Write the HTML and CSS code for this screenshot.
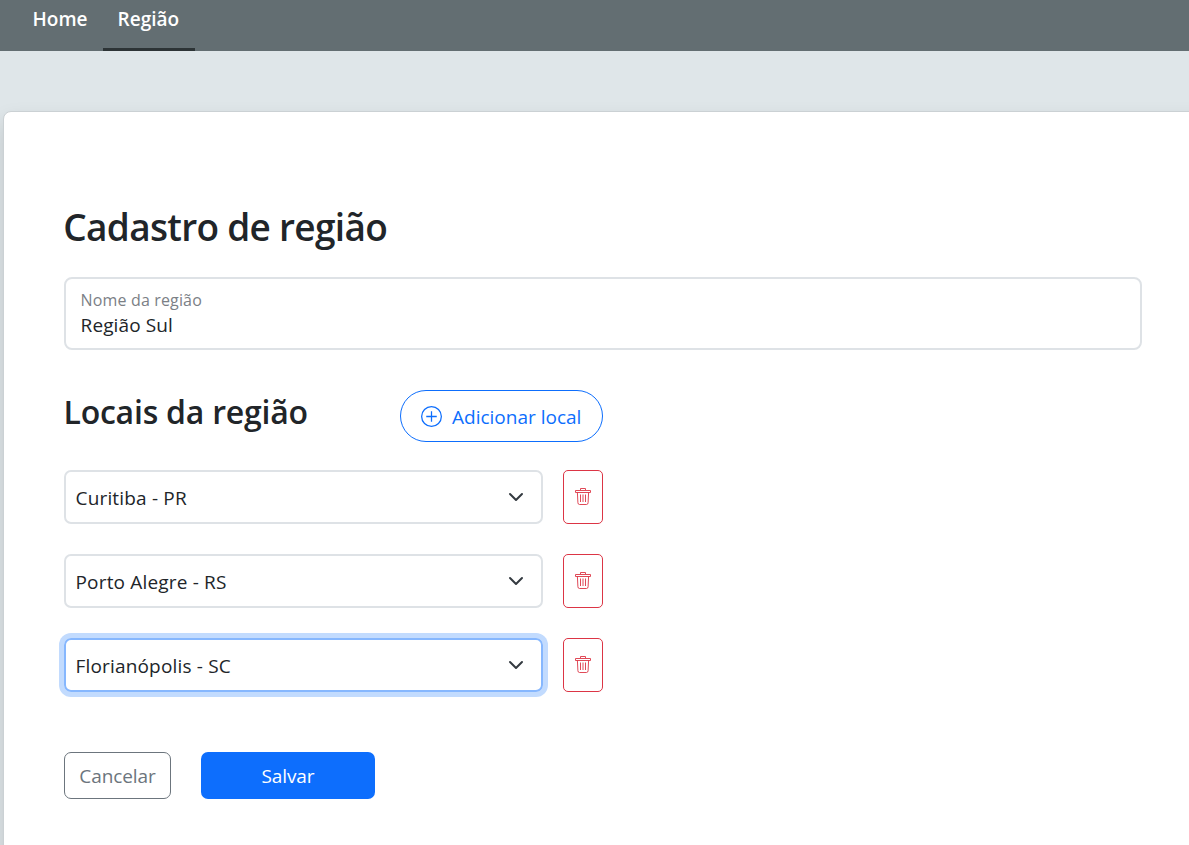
FILE: index.html
```html
<!DOCTYPE html>
<html lang="pt-BR">
<head>
<meta charset="utf-8">
<title>Cadastro de região</title>
<link rel="stylesheet" href="styles.css">
</head>
<body>
<svg class="sprite" aria-hidden="true">
  <symbol id="trash" viewBox="0 0 16 18">
    <path d="M.5 3.5h15v2H.5zM5.5 3V1.5h5V3M2.4 5.5l.5 10.2q.1 1.8 1.6 1.8h7q1.5 0 1.6-1.8l.5-10.2M5.5 7.5v7.5M8 7.5v7.5M10.5 7.5v7.5"/>
  </symbol>
  <symbol id="chevron" viewBox="0 0 16 16">
    <path d="m2 5 6 6 6-6"/>
  </symbol>
</svg>
<nav class="navbar">
  <a class="nav-link">Home</a>
  <a class="nav-link active">Região</a>
</nav>
<main class="card">
  <h1 class="title">Cadastro de região</h1>
  <div class="field">
    <span class="field-label">Nome da região</span>
    <span class="field-value">Região Sul</span>
  </div>
  <div class="places-head">
    <h2 class="subtitle">Locais da região</h2>
    <button class="btn-add" type="button">
      <svg class="plus" viewBox="0 0 20 20"><circle cx="10" cy="10" r="9.4"/><path d="M10 5v10M5 10h10"/></svg>
      <span class="add-text">Adicionar local</span>
    </button>
  </div>
  <div class="places">
    <div class="place">
      <div class="select"><span class="city">Curitiba - PR</span><svg class="chevron"><use href="#chevron"/></svg></div>
      <button class="btn-trash" type="button" aria-label="Remover"><svg class="trash"><use href="#trash"/></svg></button>
    </div>
    <div class="place">
      <div class="select"><span class="city">Porto Alegre - RS</span><svg class="chevron"><use href="#chevron"/></svg></div>
      <button class="btn-trash" type="button" aria-label="Remover"><svg class="trash"><use href="#trash"/></svg></button>
    </div>
    <div class="place">
      <div class="select focused"><span class="city">Florianópolis - SC</span><svg class="chevron"><use href="#chevron"/></svg></div>
      <button class="btn-trash" type="button" aria-label="Remover"><svg class="trash"><use href="#trash"/></svg></button>
    </div>
  </div>
  <div class="actions">
    <button class="btn-cancel" type="button">Cancelar</button>
    <button class="btn-save" type="button">Salvar</button>
  </div>
</main>
</body>
</html>
```
FILE: styles.css
```css
* { box-sizing: border-box; }
body {
  margin: 0;
  height: 845px;
  overflow: hidden;
  background: #dfe6e9;
  color: #212529;
  font: 19px/28px "Open Sans", "Noto Sans", sans-serif;
  white-space: nowrap;
}
button { margin: 0; padding: 0; background: #fff; font: inherit; cursor: pointer; }
svg { display: block; flex: none; fill: none; stroke: currentColor; }
.sprite { position: absolute; width: 0; height: 0; }

.navbar { display: flex; height: 51px; padding-left: 18px; background: #636e72; }
.nav-link {
  width: 85px;
  padding: 5px 0 0 14.6px;
  border-bottom: 3px solid transparent;
  color: #fff;
  font-size: 19px;
  font-weight: 600;
}
.nav-link.active { width: 92px; border-bottom-color: #2d3436; }

.card {
  width: 1230px;
  height: 760px;
  margin: 60px 0 0 3px;
  padding: 91px 0 0 60px;
  border: 1px solid #cbd1d4;
  border-radius: 8px;
  background: #fff;
  box-shadow: 0 10px 20px rgba(0, 0, 0, .15);
}
.title { margin: 0 0 26px -.7px; font-size: 37px; font-weight: 600; line-height: 48px; letter-spacing: -.7px; }
.field {
  display: flex;
  flex-direction: column;
  width: 1078px;
  height: 73px;
  padding: 9px 14.6px;
  border: 2px solid #dee2e6;
  border-radius: 8px;
}
.field-label { color: #7b8086; font-size: 16px; line-height: 24px; letter-spacing: .15px; }
.field-value { line-height: 27px; letter-spacing: .1px; }

.places-head { display: flex; width: 539px; height: 52px; margin-top: 40px; justify-content: space-between; }
.subtitle { margin: 0 0 0 -.5px; font-size: 32px; font-weight: 600; line-height: 44px; letter-spacing: -.23px; }
.btn-add {
  display: flex;
  align-items: center;
  gap: 10px;
  width: 203px;
  padding-left: 20px;
  border: 1px solid #0d6efd;
  border-radius: 26px;
  color: #0d6efd;
}
.add-text { padding-top: 1px; }
.plus { width: 21px; height: 21px; stroke-width: 1.2; }

.places { display: grid; gap: 30px; margin-top: 28px; }
.place { display: flex; gap: 20px; height: 54px; }
.select {
  display: flex;
  align-items: center;
  justify-content: space-between;
  width: 479px;
  padding: 0 17px 0 9.5px;
  border: 2px solid #dee2e6;
  border-radius: 7px;
}
.select.focused { border-color: #86b7fe; box-shadow: 0 0 0 5px #c2dbfe; }
.city { padding-top: 2px; letter-spacing: .17px; }
.chevron { width: 16px; height: 16px; stroke: #343a40; stroke-width: 2; stroke-linecap: round; stroke-linejoin: round; }
.btn-trash {
  display: flex;
  align-items: center;
  justify-content: center;
  width: 40px;
  border: 1px solid #dc3545;
  border-radius: 5px;
  color: #dc3545;
}
.trash { width: 16px; height: 18px; margin-bottom: 2px; stroke-width: .9; }

.actions { display: flex; gap: 30px; height: 47px; margin-top: 60px; }
.btn-cancel { width: 107px; border: 1px solid #6c757d; border-radius: 7px; color: #6c757d; letter-spacing: -.1px; }
.btn-save { width: 174px; border: 0; border-radius: 7px; background: #0d6efd; color: #fff; letter-spacing: -.1px; }
```
